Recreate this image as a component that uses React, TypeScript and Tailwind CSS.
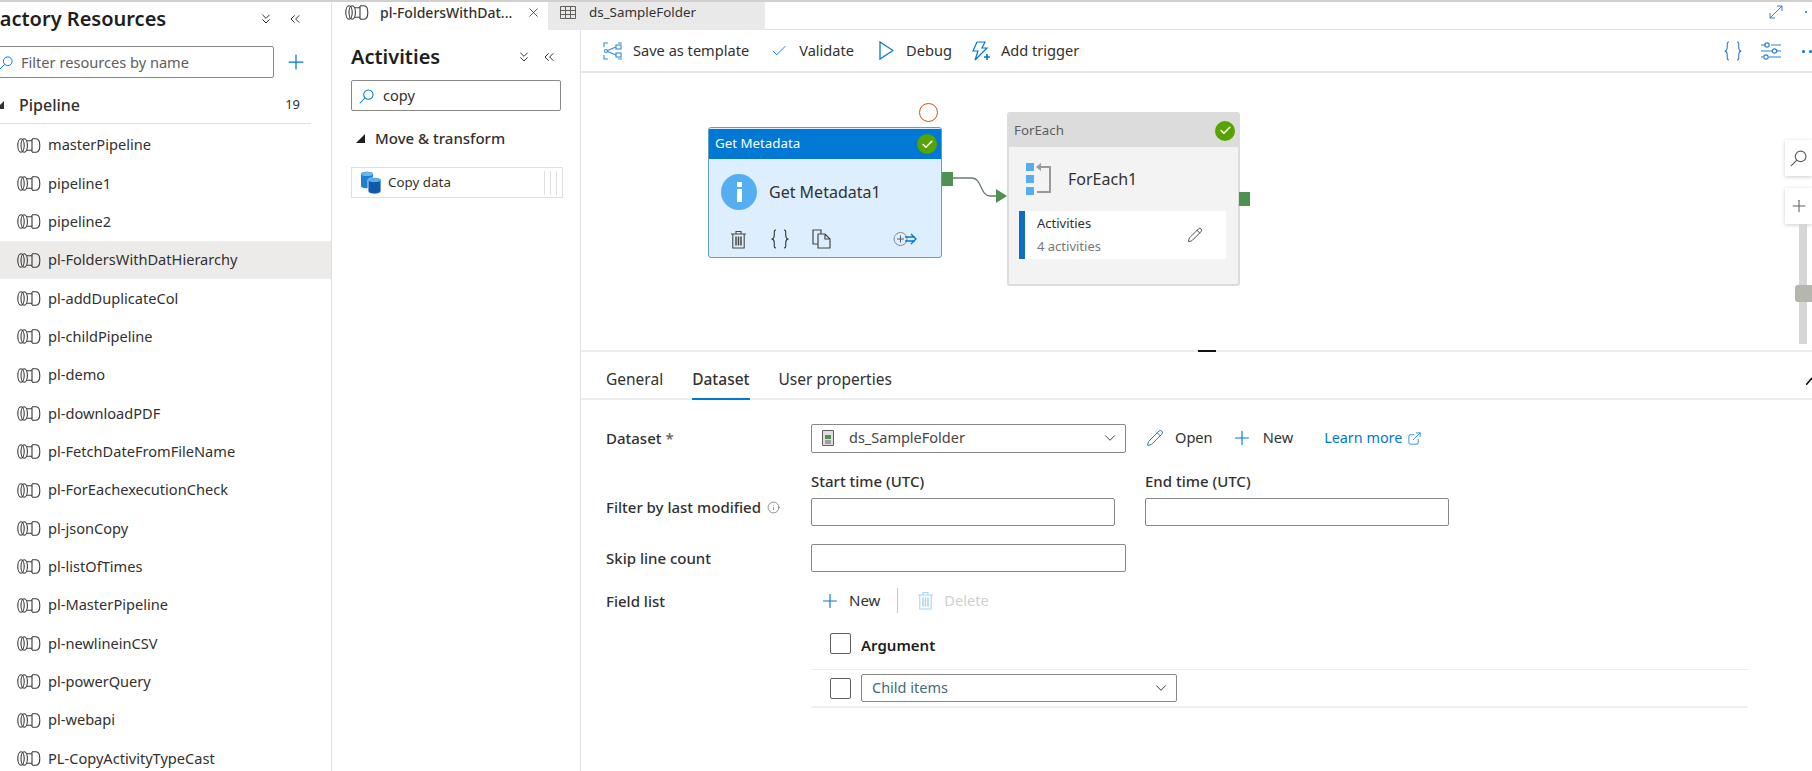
import { Check, ChevronDown, ChevronsDown, ChevronsLeft, ExternalLink, Info, Pencil, Plus, X } from "lucide-react";

const pipelines = [
  "masterPipeline",
  "pipeline1",
  "pipeline2",
  "pl-FoldersWithDatHierarchy",
  "pl-addDuplicateCol",
  "pl-childPipeline",
  "pl-demo",
  "pl-downloadPDF",
  "pl-FetchDateFromFileName",
  "pl-ForEachexecutionCheck",
  "pl-jsonCopy",
  "pl-listOfTimes",
  "pl-MasterPipeline",
  "pl-newlineinCSV",
  "pl-powerQuery",
  "pl-webapi",
  "PL-CopyActivityTypeCast",
];

function PipeIcon() {
  return (
    <svg width="24" height="15" viewBox="0 0 24 15" fill="none" stroke="#3b3a39" strokeWidth="1.1" className="shrink-0">
      <ellipse cx="4" cy="7.5" rx="3.2" ry="6.8" />
      <ellipse cx="7.2" cy="7.5" rx="3.2" ry="6.8" />
      <path d="M9.500 2.800h5.500M9.500 12.200h5.500M15 1v13" />
      <path d="M15 0.800h4c2.500 0 3.800 3 3.800 6.700s-1.300 6.700-3.800 6.700h-4" />
    </svg>
  );
}

// magnifier with the handle towards the lower left, as in the Azure portal
function SearchIcon({ color, size = 15 }: { color: string; size?: number }) {
  return (
    <svg width={size} height={size} viewBox="0 0 16 16" fill="none" stroke={color} strokeWidth="1.1" className="shrink-0">
      <circle cx="10" cy="6" r="5" />
      <path d="M6.400 9.600L0.800 15.200" />
    </svg>
  );
}

function TrashIcon({ color, size = 19 }: { color: string; size?: number }) {
  return (
    <svg width={size} height={size} viewBox="0 0 19 19" fill="none" stroke={color} strokeWidth="1.1">
      <path d="M2 4h15M7 4V1.500h5V4M3.800 4v14h11.400V4" />
      <path d="M7 6.500v9M9.500 6.500v9M12 6.500v9" strokeWidth="1.500" />
    </svg>
  );
}

function CopyIcon() {
  return (
    <svg width="19" height="20" viewBox="0 0 19 20" fill="none" stroke="#484644" strokeWidth="1.2">
      <path d="M6 15H1V1h8v4" />
      <path d="M6 5h7l5 5v9H6zM13 5v5h5" />
    </svg>
  );
}

function BracesIcon({ color, height = 20 }: { color: string; height?: number }) {
  return (
    <svg width="20" height={height} viewBox="0 0 20 20" fill="none" stroke={color} strokeWidth="1.1">
      <path d="M6 1C3.500 1 4.500 4 4.200 7 4 9 3 10 1.500 10 3 10 4 11 4.200 13 4.500 16 3.500 19 6 19" />
      <path d="M14 1c2.500 0 1.500 3 1.800 6 .2 2 1.200 3 2.700 3-1.500 0-2.500 1-2.700 3-.3 3 .7 6-1.800 6" />
    </svg>
  );
}

function StatusBadge() {
  return (
    <span className="flex h-[20px] w-[20px] items-center justify-center rounded-full bg-[#57a300]">
      <Check size={13} strokeWidth={3} className="text-white" />
    </span>
  );
}

function OutPort() {
  return <span className="block h-[14px] w-[11px] bg-[#4f9153]" />;
}

function TemplateIcon() {
  return (
    <svg width="20" height="18" viewBox="0 0 20 18" fill="none" stroke="#2f8ad8" strokeWidth="1.1">
      <path d="M1 5V1h4M1 13v4h4M15 1h4M19 17h-4" />
      <circle cx="3" cy="9" r="1.500" />
      <rect x="13" y="3" width="5" height="4" />
      <rect x="13" y="11" width="5" height="4" />
      <path d="M4.500 8.500L13 5M4.500 9.500L13 13" />
    </svg>
  );
}

function SlidersIcon() {
  return (
    <svg width="20" height="18" viewBox="0 0 20 18" fill="none" stroke="#2f7fd0" strokeWidth="1.2">
      <path d="M0 3h5M10 3h10M0 9h11M16 9h4M0 15h2M8 15h12" />
      <circle cx="6" cy="3" r="2.200" />
      <circle cx="13.500" cy="9" r="2.200" />
      <circle cx="5" cy="15" r="2.200" />
    </svg>
  );
}

function TriggerIcon() {
  return (
    <svg width="20" height="20" viewBox="0 0 20 20" fill="none" stroke="#0078d4" strokeWidth="1.2">
      <path d="M6 1h8l-3 6h5L4 19l3-9H2z" />
      <path d="M13 16h6M16 13v6" strokeWidth="1.600" />
    </svg>
  );
}

function DebugIcon() {
  return (
    <svg width="15" height="19" viewBox="0 0 15 19" fill="none" stroke="#0078d4" strokeWidth="1.3">
      <path d="M1 1l13 8.500L1 18z" />
    </svg>
  );
}

function AddOutIcon() {
  return (
    <svg width="24" height="16" viewBox="0 0 24 16" fill="none">
      <circle cx="7.500" cy="8" r="6.500" stroke="#8a8886" />
      <path d="M4 8h7M7.500 4.500v7" stroke="#605e5c" />
      <path d="M12 6h10M12 10h10M18 3l5 5-5 5" stroke="#0078d4" strokeWidth="1.300" />
    </svg>
  );
}

function ForEachIcon() {
  return (
    <svg width="26" height="34" viewBox="0 0 26 34" fill="none">
      <rect x="0" y="1" width="8" height="8" fill="#55aeef" />
      <rect x="0" y="13" width="8" height="8" fill="#55aeef" />
      <rect x="0" y="25" width="8" height="8" fill="#55aeef" />
      <path d="M15 5h9v25H11" stroke="#9a9a9a" strokeWidth="2" />
      <path d="M10 5l5-4v8z" fill="#9a9a9a" />
    </svg>
  );
}

function CopyDataIcon() {
  return (
    <svg width="22" height="24" viewBox="0 0 22 24">
      <path d="M1 3c0-3 12-3 12 0v12c0 3-12 3-12 0z" fill="#1c7fd6" />
      <ellipse cx="7" cy="3" rx="6" ry="2" fill="#6cb8f0" />
      <path d="M8 9c0-3 13-3 13 0v11c0 4-13 4-13 0z" fill="#0f5aa8" stroke="#fff" strokeWidth="0.800" />
      <ellipse cx="14.500" cy="9" rx="6.500" ry="2" fill="#5aaeea" />
    </svg>
  );
}

function DatasetIcon() {
  return (
    <svg width="12" height="16" viewBox="0 0 12 16">
      <path d="M0.500 0.500h11v15h-11z" fill="#e1dfdd" stroke="#605e5c" />
      <rect x="3" y="5" width="6" height="4" fill="#4f9153" />
      <path d="M3 11h6M3 13h6" stroke="#605e5c" />
    </svg>
  );
}

function TableIcon() {
  return (
    <svg width="16" height="13" viewBox="0 0 16 13" fill="none" stroke="#605e5c">
      <path d="M0.500 0.500h15v12h-15zM0.500 4.500h15M0.500 8.500h15M5.500 0.500v12M10.500 0.500v12" />
    </svg>
  );
}

function CheckBox() {
  return <span className="block h-[21px] w-[21px] rounded-[2px] border border-[#605e5c] bg-white" />;
}

function FieldLabel({ children }: { children: React.ReactNode }) {
  return <span className="text-[15px] font-medium text-[#323130]">{children}</span>;
}

function TextBox({ width }: { width: string }) {
  return <div className={`h-[28px] border border-[#8a8886] rounded-[2px] bg-white ${width}`} />;
}

function ToolButton({ icon, label, className }: { icon: React.ReactNode; label: string; className: string }) {
  return (
    <div className={`flex items-center ${className}`}>
      <span className="flex w-[20px] justify-center">{icon}</span>
      <span className="ml-[10px] text-[14.6px] text-[#323130]">{label}</span>
    </div>
  );
}

export default function App() {
  return (
    <div className="flex h-[771px] w-[1812px] overflow-hidden border-t-2 border-[#d2d0ce] bg-white font-['Noto_Sans',sans-serif] text-[#323130]">
      {/* resource tree, scrolled a little to the right in the picture */}
      <aside className="h-full w-[332px] shrink-0 overflow-hidden border-r border-[#e1dfdd]">
        <div className="flex h-[33px] items-center pr-[28px]">
          <h2 className="-ml-[11px] whitespace-nowrap text-[20px] font-semibold leading-none text-[#201f1e]">Factory Resources</h2>
          <ChevronsDown size={16} strokeWidth={1.5} className="ml-auto text-[#323130]" />
          <ChevronsLeft size={16} strokeWidth={1.5} className="ml-[13px] text-[#323130]" />
        </div>
        <div className="mt-[11px] flex h-[32px] items-center">
          <div className="-ml-[10px] flex h-full w-[284px] items-center rounded-[2px] border border-[#8a8886] pl-[8px] pt-[1px]">
            <SearchIcon color="#0078d4" size={14} />
            <span className="ml-[8px] text-[14.6px] text-[#605e5c]">Filter resources by name</span>
          </div>
          <Plus size={24} strokeWidth={1.25} className="ml-[10px] text-[#0078d4]" />
        </div>
        <div className="mr-[20px] mt-[8px] flex h-[38px] items-center border-b border-[#e1dfdd] pr-[11px]">
          <span className="-ml-[4px] h-0 w-0 border-b-[8px] border-l-[8px] border-b-[#323130] border-l-transparent" />
          <span className="ml-[15px] flex-1 text-[16px] font-medium">Pipeline</span>
          <span className="text-[13px]">19</span>
        </div>
        <ul className="mt-[2px]">
          {pipelines.map((name) => (
            <li
              key={name}
              className={`flex h-[38.35px] items-center pl-[17px] ${name === "pl-FoldersWithDatHierarchy" ? "bg-[#edebe9]" : ""}`}
            >
              <PipeIcon />
              <span className="ml-[7px] text-[14.6px] text-[#323130]">{name}</span>
            </li>
          ))}
        </ul>
      </aside>

      <div className="flex min-w-0 flex-1 flex-col">
        {/* open tabs */}
        <div className="flex h-[28px] shrink-0">
          <div className="flex w-[216px] items-center pb-[8px] pl-[13px]">
            <PipeIcon />
            <span className="ml-[11px] text-[14px] font-medium">pl-FoldersWithDat...</span>
            <X size={15} strokeWidth={1.25} className="ml-[14px] text-[#323130]" />
          </div>
          <div className="flex w-[217px] items-center bg-[#e9e9e9] pb-[8px] pl-[12px]">
            <TableIcon />
            <span className="ml-[13px] text-[13.4px] text-[#323130]">ds_SampleFolder</span>
          </div>
          <div className="flex flex-1 items-center justify-end border-b border-[#e1dfdd] pb-[7px] pr-[5px]">
            <svg width="14" height="14" viewBox="0 0 14 14" fill="none" stroke="#2f7fd0" className="mr-[22px]">
              <path d="M1 13L13 1M8 1h5v5M1 8v5h5" />
            </svg>
            <span className="h-[2px] w-[2px] rounded-full bg-[#0078d4]" />
          </div>
        </div>

        <div className="flex min-h-0 flex-1">
          {/* activities */}
          <section className="w-[249px] shrink-0 border-r border-[#e1dfdd] pl-[19px] pr-[19px]">
            <div className="flex h-[49px] items-center pr-[4px] pt-[4px]">
              <h2 className="text-[20px] font-semibold leading-none text-[#201f1e]">Activities</h2>
              <ChevronsDown size={16} strokeWidth={1.5} className="ml-auto" />
              <ChevronsLeft size={16} strokeWidth={1.5} className="ml-[9px]" />
            </div>
            <div className="mt-[1px] flex h-[31px] items-center rounded-[2px] border border-[#8a8886] pl-[7px] pt-[1px]">
              <SearchIcon color="#0078d4" size={15} />
              <span className="ml-[9px] text-[14.6px]">copy</span>
            </div>
            <div className="mt-[13px] flex h-[28px] items-center pl-[5px]">
              <span className="h-0 w-0 border-b-[9px] border-l-[9px] border-b-[#201f1e] border-l-transparent" />
              <span className="ml-[10px] text-[15px] font-medium">Move &amp; transform</span>
            </div>
            <div className="-mr-[2px] mt-[15px] flex h-[31px] items-center border border-[#e1dfdd] pl-[8px] pr-[5px]">
              <CopyDataIcon />
              <span className="ml-[6px] flex-1 text-[13.4px]">Copy data</span>
              <span className="flex h-[24px] gap-[5px]">
                <span className="w-px bg-[#e1dfdd]" />
                <span className="w-px bg-[#e1dfdd]" />
                <span className="w-px bg-[#e1dfdd]" />
              </span>
            </div>
          </section>

          {/* editor */}
          <main className="flex min-w-0 flex-1 flex-col">
            <div className="flex h-[43px] shrink-0 items-center border-b-2 border-[#e6e6e6] pl-[22px] pt-[1px]">
              <ToolButton icon={<TemplateIcon />} label="Save as template" className="" />
              <ToolButton icon={<Check size={18} strokeWidth={1.25} className="text-[#0078d4]" />} label="Validate" className="ml-[20px]" />
              <ToolButton icon={<DebugIcon />} label="Debug" className="ml-[22px]" />
              <ToolButton icon={<TriggerIcon />} label="Add trigger" className="ml-[19px]" />
              <span className="ml-auto"><BracesIcon color="#2f7fd0" /></span>
              <span className="ml-[18px]"><SlidersIcon /></span>
              <span className="ml-[21px] flex gap-[4px]">
                <span className="h-[3px] w-[3px] rounded-full bg-[#0078d4]" />
                <span className="h-[3px] w-[3px] rounded-full bg-[#0078d4]" />
              </span>
            </div>

            {/* pipeline canvas: nodes sit at free positions */}
            <div className="relative h-[279px] shrink-0 border-b-2 border-[#ececec]">
              <span className="absolute left-[338px] top-[30px] h-[19px] w-[19px] rounded-full border border-[#c8570f]" />

              <div className="absolute left-[127px] top-[54px] h-[131px] w-[234px] overflow-hidden rounded-[3px] border border-[#5e9ec9] bg-[#ddefff]">
                <div className="mt-[1px] flex h-[30px] items-center justify-between bg-[#0078d4] pl-[6px] pr-[4px]">
                  <span className="text-[13.3px] text-white">Get Metadata</span>
                  <StatusBadge />
                </div>
                <div className="flex items-center pl-[12px] pt-[15px]">
                  <span className="flex h-[36px] w-[36px] items-center justify-center rounded-full bg-[#55aeef]">
                    <span className="flex flex-col items-center gap-[2px]">
                      <span className="h-[5px] w-[5px] bg-white" />
                      <span className="h-[13px] w-[5px] bg-white" />
                    </span>
                  </span>
                  <span className="ml-[12px] text-[16px] text-[#323130]">Get Metadata1</span>
                </div>
                <div className="mt-[19px] flex items-center pl-[20px]">
                  <TrashIcon color="#484644" />
                  <span className="ml-[22px]"><BracesIcon color="#323130" /></span>
                  <span className="ml-[22px]"><CopyIcon /></span>
                  <span className="ml-[62px]"><AddOutIcon /></span>
                </div>
              </div>
              <span className="absolute left-[361px] top-[99px]"><OutPort /></span>

              <svg width="56" height="36" viewBox="0 0 56 36" fill="none" className="absolute left-[371px] top-[100px]">
                <path d="M0 5h20c10 0 8 18 18 18h8" stroke="#6b7c6d" strokeWidth="1.300" />
                <path d="M44 16l11 7-11 7z" fill="#4f9153" />
              </svg>

              <div className="absolute left-[426px] top-[39px] h-[174px] w-[233px] overflow-hidden rounded-[3px] border-2 border-[#dcdcdc] bg-[#f3f3f3]">
                <div className="flex h-[33px] items-center justify-between bg-[#dcdcdc] pl-[5px] pr-[3px]">
                  <span className="text-[13.3px] text-[#605e5c]">ForEach</span>
                  <StatusBadge />
                </div>
                <div className="flex h-[52px] items-center pl-[17px] pt-[11px]">
                  <ForEachIcon />
                  <span className="ml-[16px] text-[16px]">ForEach1</span>
                </div>
                <div className="ml-[10px] mt-[12px] flex h-[48px] w-[207px] items-center border-l-[6px] border-[#106ebe] bg-white pl-[12px] pr-[23px]">
                  <div className="flex-1">
                    <div className="text-[13px] leading-[23px]">Activities</div>
                    <div className="text-[13px] leading-[23px] text-[#7a7876]">4 activities</div>
                  </div>
                  <Pencil size={16} strokeWidth={1.25} />
                </div>
              </div>
              <span className="absolute left-[658px] top-[119px]"><OutPort /></span>

              {/* zoom controls */}
              <div className="absolute right-0 top-[67px] flex h-[36px] w-[27px] items-center justify-center bg-white shadow-[0_1px_4px_rgba(0,0,0,0.2)]">
                <SearchIcon color="#605e5c" size={17} />
              </div>
              <div className="absolute right-0 top-[115px] flex h-[36px] w-[27px] items-center justify-center bg-white shadow-[0_1px_4px_rgba(0,0,0,0.2)]">
                <Plus size={20} strokeWidth={1.25} className="text-[#605e5c]" />
              </div>
              <div className="absolute right-[5px] top-[151px] h-[120px] w-[8px] bg-[#d6d6d6]" />
              <div className="absolute right-0 top-[212px] h-[17px] w-[17px] rounded-l-[3px] bg-[#b5b6ae]" />
              <span className="absolute -bottom-[2px] left-[617px] h-[2px] w-[18px] bg-[#111]" />
            </div>

            {/* properties */}
            <div className="relative min-h-0 flex-1 overflow-hidden">
              <div className="flex h-[48px] items-end border-b-2 border-[#ececec] pl-[25px]">
                <span className="pb-[7px] text-[15.5px] text-[#323130]">General</span>
                <span className="-mb-[2px] ml-[29px] border-b-2 border-[#0078d4] pb-[7px] text-[15.5px] font-medium">Dataset</span>
                <span className="ml-[29px] pb-[7px] text-[15.5px]">User properties</span>
                <svg width="12" height="8" viewBox="0 0 12 8" fill="none" stroke="#111" strokeWidth="1.500" className="-mr-[6px] mb-[13px] ml-auto">
                  <path d="M0 8L6 1" />
                </svg>
              </div>

              <div className="mt-[23px] flex h-[30px] items-center pl-[25px]">
                <span className="w-[205px]"><FieldLabel>Dataset <span className="text-[#605e5c]">*</span></FieldLabel></span>
                <div className="flex h-[29px] w-[315px] items-center rounded-[2px] border border-[#8a8886] pl-[10px] pr-[6px]">
                  <DatasetIcon />
                  <span className="ml-[15px] flex-1 text-[14.5px] text-[#484644]">ds_SampleFolder</span>
                  <ChevronDown size={18} strokeWidth={1.25} />
                </div>
                <Pencil size={18} strokeWidth={1.25} className="ml-[20px] text-[#0078d4]" />
                <span className="ml-[11px] text-[14.6px]">Open</span>
                <Plus size={22} strokeWidth={1.25} className="ml-[18px] text-[#0078d4]" />
                <span className="ml-[10px] text-[14.6px]">New</span>
                <span className="ml-[31px] text-[14.4px] text-[#0078d4]">Learn more</span>
                <ExternalLink size={15} strokeWidth={1.25} className="ml-[5px] text-[#0078d4]" />
              </div>

              <div className="mt-[15px] flex pl-[25px]">
                <div className="flex w-[205px] items-end pb-[8px]">
                  <FieldLabel>Filter by last modified</FieldLabel>
                  <Info size={13} strokeWidth={1.25} className="mb-[4px] ml-[6px] text-[#605e5c]" />
                </div>
                <div className="w-[334px]">
                  <div className="h-[30px] pt-[3px] text-[15px] font-medium leading-[20px]">Start time (UTC)</div>
                  <TextBox width="w-[304px]" />
                </div>
                <div>
                  <div className="h-[30px] pt-[3px] text-[15px] font-medium leading-[20px]">End time (UTC)</div>
                  <TextBox width="w-[304px]" />
                </div>
              </div>

              <div className="mt-[18px] flex items-center pl-[25px]">
                <span className="w-[205px]"><FieldLabel>Skip line count</FieldLabel></span>
                <TextBox width="w-[315px]" />
              </div>

              <div className="mt-[15px] flex items-center pl-[25px]">
                <span className="w-[205px]"><FieldLabel>Field list</FieldLabel></span>
                <div className="flex h-[27px] items-center pl-[8px]">
                  <Plus size={22} strokeWidth={1.25} className="text-[#0078d4]" />
                  <span className="ml-[8px] text-[15px]">New</span>
                  <span className="ml-[17px] h-[25px] w-px bg-[#c8c6c4]" />
                  <span className="ml-[18px]"><TrashIcon color="#a8d4f2" /></span>
                  <span className="ml-[9px] text-[14.6px] text-[#d2d0ce]">Delete</span>
                </div>
              </div>

              <div className="ml-[230px] mr-[64px] mt-[19px]">
                <div className="flex h-[37px] items-start border-b border-[#edebe9] pl-[19px]">
                  <CheckBox />
                  <span className="ml-[10px] text-[15px] font-semibold leading-[24px] text-[#201f1e]">Argument</span>
                </div>
                <div className="flex h-[38px] items-center border-b-2 border-[#f0f0f0] pl-[19px]">
                  <CheckBox />
                  <div className="ml-[10px] flex h-[28px] w-[316px] items-center justify-between rounded-[2px] border border-[#8a8886] pl-[10px] pr-[6px]">
                    <span className="text-[14.5px] text-[#3f6b80]">Child items</span>
                    <ChevronDown size={18} strokeWidth={1.25} />
                  </div>
                </div>
              </div>
            </div>
          </main>
        </div>
      </div>
    </div>
  );
}
